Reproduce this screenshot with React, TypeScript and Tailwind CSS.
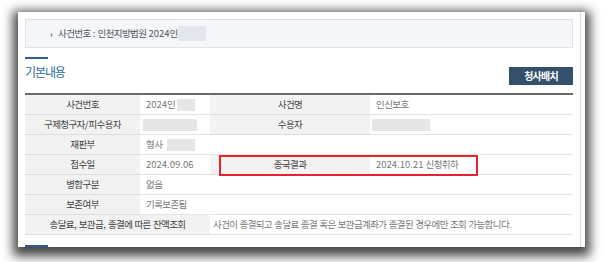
import React from "react";

function R({ text }: { text: string }) {
  const parts = text.split(/([0-9.:\/ ,]+)/);
  return (
    <>
      {parts.map((p, i) =>
        /^[0-9.:\/ ,]+$/.test(p) ? (
          <span key={i} className="tracking-normal whitespace-pre">
            {p}
          </span>
        ) : (
          <span key={i}>{p}</span>
        )
      )}
    </>
  );
}

function Label({ text, span = "" }: { text: string; span?: string }) {
  return (
    <div className={`h-[20px] border-b border-[#dedede] bg-[#f2f2f2] flex items-center justify-center text-[#3f3f3f] ${span}`}>
      <R text={text} />
    </div>
  );
}

function Value({ children, span = "" }: { children: React.ReactNode; span?: string }) {
  return (
    <div className={`h-[20px] border-b border-[#e4e4e4] bg-white flex items-center pl-[6px] text-[#777] ${span}`}>
      {children}
    </div>
  );
}

function Blank({ w, ml = "ml-0" }: { w: string; ml?: string }) {
  return <span className={`inline-block h-[12px] bg-[#e6e6e6] ${w} ${ml}`} />;
}

export default function App() {
  return (
    <div
      className="w-[606px] h-[262px] bg-white pl-[18px] pt-[12px] overflow-hidden"
      style={{ fontFamily: '"Noto Sans CJK KR", "Noto Sans", sans-serif' }}
    >
      <div className="w-[567px] h-[235px] bg-white shadow-[0_4px_10px_5px_rgba(0,0,0,0.72)] flex overflow-hidden">
        <div className="w-[563px] h-full border-r border-[#dadada] pl-[7px] pr-[7px] pt-[7px] text-[9.5px] tracking-[-0.6px] leading-none">
          {/* case header */}
          <div className="h-[29px] border border-[#dfe3e9] bg-[#f4f6f9] flex items-center pl-[24px] text-[#4d5562]">
            <span className="mr-[6px] -mt-[3px]">,</span>
            <R text="사건번호 : 인천지방법원 2024인" />
            <span className="inline-block w-[28px] h-[15px] bg-[#e3e7ee]" />
          </div>

          {/* section title */}
          <div className="mt-[9px] w-[23px] h-[2px] bg-[#2f5f8f]" />
          <div className="h-[26px] flex items-start justify-between">
            <span className="mt-[5px] text-[12px] tracking-[-1.1px] leading-[15px] text-[#2d6aa5]">기본내용</span>
            <button className="mt-[8px] w-[64px] h-[18px] bg-[#34506d] text-white text-[10px] font-bold tracking-[-0.8px] flex items-center justify-center">
              청사배치
            </button>
          </div>

          {/* table */}
          <div className="relative mt-[8px] border-t-2 border-[#6a6a6a] grid grid-cols-[115px_70px_160px_203px]">
            <Label text="사건번호" />
            <Value>
              <R text="2024인" />
              <Blank w="w-[18px]" ml="ml-[2px]" />
            </Value>
            <Label text="사건명" />
            <Value>인신보호</Value>

            <Label text="구제청구자/피수용자" />
            <Value>
              <Blank w="w-[54px]" ml="-ml-[3px]" />
            </Value>
            <Label text="수용자" />
            <Value>
              <Blank w="w-[58px]" ml="-ml-[4px]" />
            </Value>

            <Label text="재판부" />
            <Value span="col-span-3">
              형사
              <Blank w="w-[28px]" ml="ml-[5px]" />
            </Value>

            <Label text="접수일" />
            <Value>
              <R text="2024.09.06" />
            </Value>
            <Label text="종국결과" />
            <Value>
              <R text="2024.10.21 신청취하" />
            </Value>

            <Label text="병합구분" />
            <Value span="col-span-3">없음</Value>

            <Label text="보존여부" />
            <Value span="col-span-3">기록보존됨</Value>

            <Label text="송달료, 보관금, 종결에 따른 잔액조회" span="col-span-2" />
            <Value span="col-span-2">
              <span className="-ml-[3px]">
                <R text="사건이 종결되고 송달료 종결 혹은 보관금계좌가 종결된 경우에만 조회 가능합니다." />
              </span>
            </Value>

            <div className="absolute left-[194px] top-[60px] w-[259px] h-[21px] border-2 border-[#e0262c]" />
          </div>

          <div className="mt-[10px] w-[23px] h-[2px] bg-[#2f5f8f]" />
        </div>
      </div>
    </div>
  );
}
